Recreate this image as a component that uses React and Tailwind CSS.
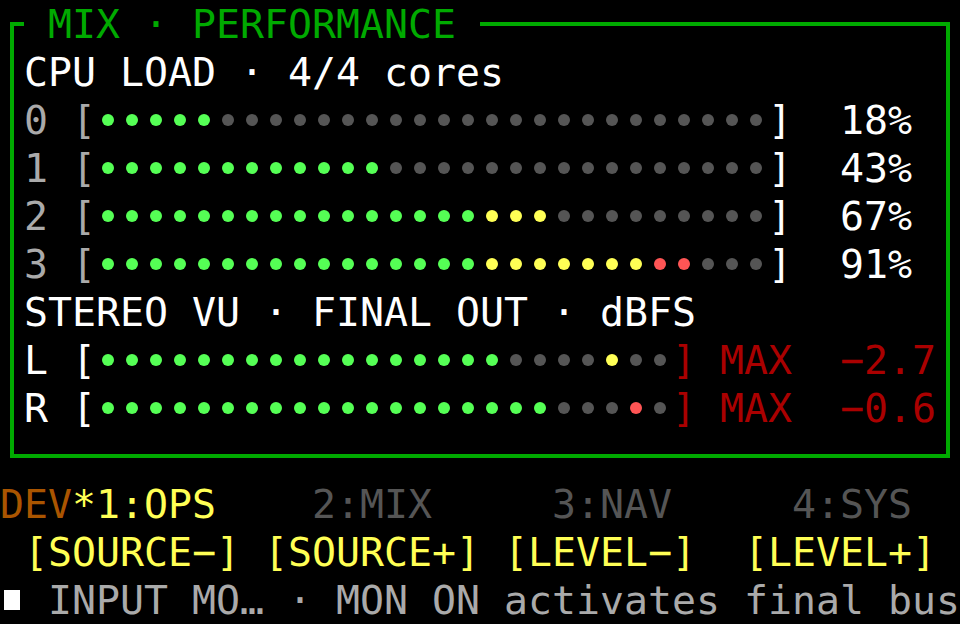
const GREEN = "bg-[#55ff55]";
const YELLOW = "bg-[#ffff55]";
const RED = "bg-[#ff5555]";
const OFF = "bg-[#555555]";

const cores = [
  { id: 0, pct: 18 },
  { id: 1, pct: 43 },
  { id: 2, pct: 67 },
  { id: 3, pct: 91 },
];

function cpuColors(pct) {
  const lit = Math.round((pct / 100) * 28);
  return Array.from({ length: 28 }, (_, i) => {
    if (i >= lit) return OFF;
    if (i < 16) return GREEN;
    if (i < 23) return YELLOW;
    return RED;
  });
}

function vuColors(level, peak, peakColor) {
  return Array.from({ length: 24 }, (_, i) => {
    if (i < level) return GREEN;
    if (i === peak) return peakColor;
    return OFF;
  });
}

function Dots({ colors }) {
  return (
    <span className="flex">
      {colors.map((c, i) => (
        <span key={i} className="w-6 h-12 flex items-center justify-center">
          <span className={`w-3 h-3 rounded-full ${c}`} />
        </span>
      ))}
    </span>
  );
}

export default function App() {
  return (
    <div className="w-[960px] h-[624px] bg-black overflow-hidden flex flex-col pt-[22px] font-['DejaVu_Sans_Mono','Liberation_Mono',monospace] text-[39.86px] leading-[48px] whitespace-pre text-white">
      {/* MIX PERFORMANCE panel */}
      <div className="relative mx-[10px] border-4 border-[#00aa00] px-[10px] py-[22px]">
        <div className="absolute left-[10px] top-[-26px] h-12 bg-black text-[#00aa00]">
          {" MIX · PERFORMANCE "}
        </div>

        <div className="h-12">CPU LOAD · 4/4 cores</div>

        {cores.map((c) => (
          <div key={c.id} className="flex h-12">
            <span className="text-[#aaaaaa]">{`${c.id} [`}</span>
            <Dots colors={cpuColors(c.pct)} />
            <span>{`]  ${c.pct}%`}</span>
          </div>
        ))}

        <div className="h-12">STEREO VU · FINAL OUT · dBFS</div>

        <div className="flex h-12">
          <span>L [</span>
          <Dots colors={vuColors(17, 21, YELLOW)} />
          <span className="text-[#aa0000]">] MAX  −2.7</span>
        </div>
        <div className="flex h-12">
          <span>R [</span>
          <Dots colors={vuColors(19, 22, RED)} />
          <span className="text-[#aa0000]">] MAX  −0.6</span>
        </div>
      </div>

      {/* tabs + softkeys + status */}
      <div className="mt-[22px]">
        <div className="flex h-12">
          <span className="text-[#aa5500]">DEV</span>
          <span className="text-[#ffff55]">*1:OPS</span>
          <span className="text-[#555555]">{"    2:MIX     3:NAV     4:SYS"}</span>
        </div>
        <div className="h-12 text-[#ffff55]">{" [SOURCE−] [SOURCE+] [LEVEL−]  [LEVEL+]"}</div>
        <div className="flex h-12">
          <span className="w-6 h-12 flex items-center justify-center">
            <span className="w-4 h-5 bg-white" />
          </span>
          <span className="text-[#aaaaaa]">{" INPUT MO… · MON ON activates final bus"}</span>
        </div>
      </div>
    </div>
  );
}
